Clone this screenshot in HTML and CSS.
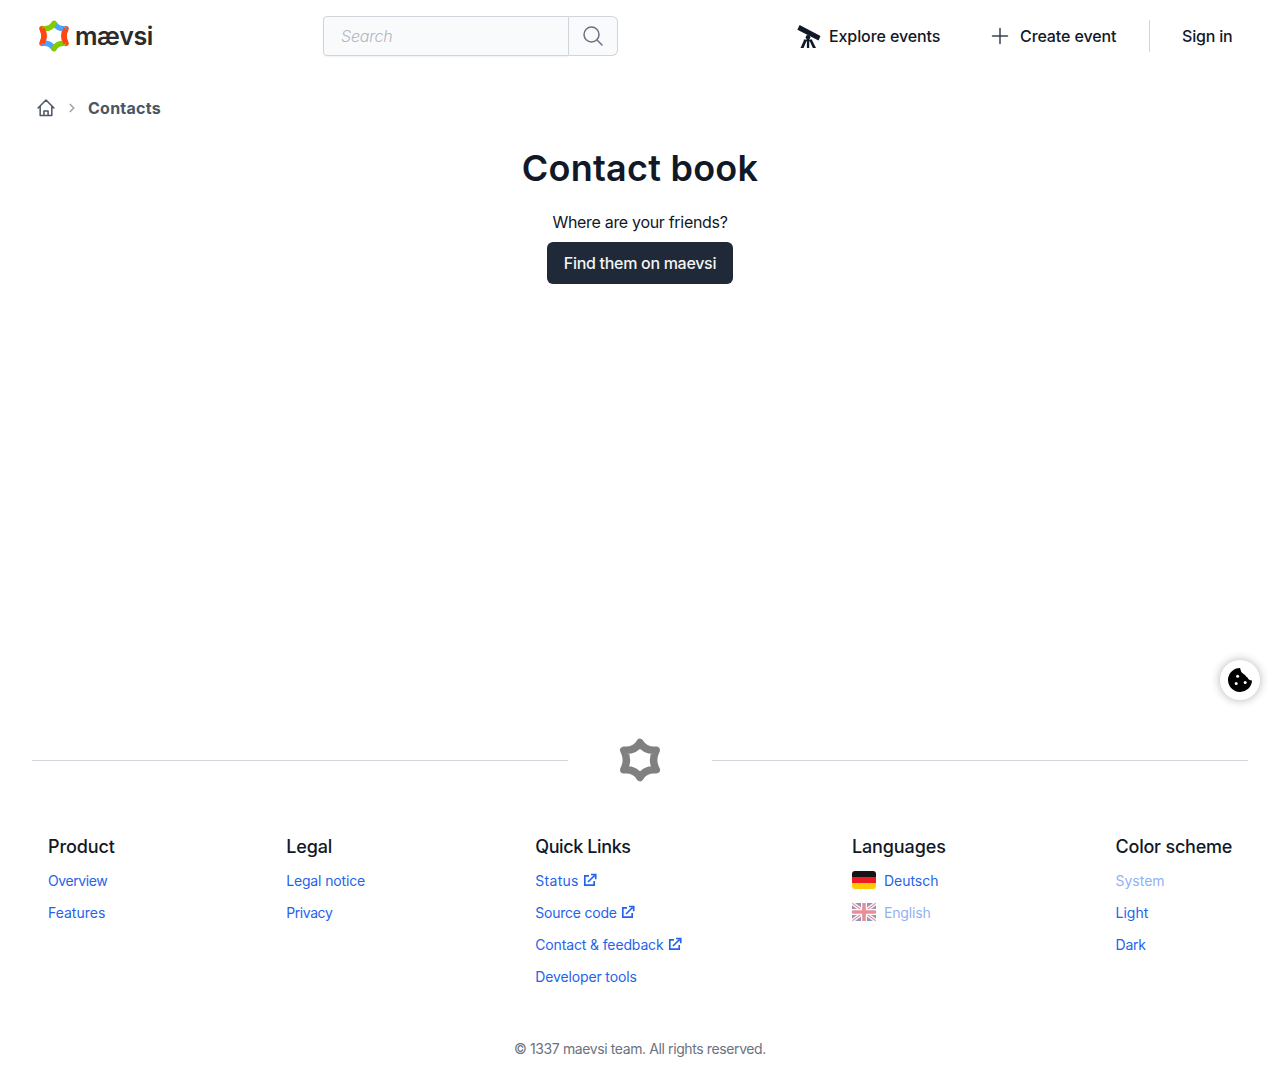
FILE: index.html
```html
<!DOCTYPE html>
<html lang="en">
<head>
<meta charset="utf-8">
<title>Contact book · maevsi</title>
<link rel="stylesheet" href="styles.css">
</head>
<body>
<header class="header">
  <a class="logo" href="#">
    <svg class="logo-star" viewBox="0 0 42 44" fill="none" stroke-width="7.500" stroke-linecap="round">
      <path stroke="#ff4713" d="M37.500 12Q32 22 37.500 32M4.500 12Q10 22 4.500 32"/>
      <path stroke="#4da3ff" d="M22.500 6.500Q27 12.500 35 12M7 32Q15 31.500 19.500 37.500"/>
      <path stroke="#80cc00" d="M8 12Q17 12 21 4.500M34 32Q25 32 21 39.500"/>
      <path stroke="#ff4713" stroke-linecap="butt" d="M37.500 12Q32 22 37.500 32M4.500 12Q10 22 4.500 32"/>
    </svg>
    <span class="wordmark">mævsi</span>
  </a>
  <form class="search">
    <input class="search-input" type="text" placeholder="Search">
    <button class="search-button" type="button" aria-label="Search">
      <svg width="24" height="24" viewBox="0 0 24 24" fill="none" stroke="currentColor" stroke-width="1.5" stroke-linecap="round"><path d="m21 21-5.2-5.2M10.5 18a7.5 7.5 0 1 0 0-15 7.5 7.5 0 0 0 0 15Z"/></svg>
    </button>
  </form>
  <nav class="nav">
    <a class="nav-link explore" href="#">
      <svg width="24" height="24" viewBox="0 0 24 24" fill="currentColor"><path d="M2.600 1 23.500 12l-2 4.500L.4 5.800Z"/><circle cx="11" cy="13.200" r="2.300"/><path d="M6.800 15.500h8.400v1.700H6.800zM7.100 16h2.800L6.600 24H3.500zM9.900 15h2.300v9H9.900zM12.200 16h2.800l4 8h-3.100z"/></svg>
      <span class="t-nav">Explore events</span>
    </a>
    <a class="nav-link create" href="#">
      <svg width="24" height="24" viewBox="0 0 24 24" fill="none" stroke="currentColor" stroke-width="1.5" stroke-linecap="round"><path d="M12 4.5v15M4.500 12h15"/></svg>
      <span class="t-nav">Create event</span>
    </a>
    <a class="nav-link signin" href="#"><span class="t-sign">Sign in</span></a>
  </nav>
</header>
<main class="main">
  <nav class="breadcrumb">
    <svg width="20" height="20" viewBox="0 0 24 24" fill="none" stroke="currentColor" stroke-width="1.800" stroke-linecap="round" stroke-linejoin="round"><path d="m2.500 12 9.500-9.500 9.500 9.500M5 10v11h14V10M9.500 21v-5.500h5V21"/></svg>
    <svg class="chevron" width="16" height="16" viewBox="0 0 16 16" fill="none" stroke="currentColor" stroke-width="1.5"><path d="m5.800 4 4 4-4 4"/></svg>
    <span class="t-contacts">Contacts</span>
  </nav>
  <h1 class="title">Contact book</h1>
  <p class="question">Where are your friends?</p>
  <a class="find-button" href="#">Find them on maevsi</a>
</main>
<button class="cookie" type="button" aria-label="Cookie settings">
  <svg width="24" height="24" viewBox="0 0 24 24"><path d="M12 0A12 12 0 1 0 24 12.500Q20.500 12.500 19.500 9.500L18 8.500Q17.500 6.500 15.500 6 12.500 4 12 0Z"/><g fill="#fff"><circle cx="9.600" cy="8.300" r="1.500"/><circle cx="8.200" cy="15.600" r="1.500"/><circle cx="17.200" cy="14.400" r="1.500"/></g></svg>
</button>
<footer class="footer">
  <div class="divider">
    <span class="line"></span>
    <svg width="42" height="44" viewBox="0 0 42 44" fill="none" stroke="#808080" stroke-width="7.500" stroke-linecap="round" stroke-linejoin="round"><path d="M21 4.500Q25.500 13 37.200 12.200Q32 22 37.200 31.800Q25.500 31 21 39.500Q16.500 31 4.800 31.800Q10 22 4.800 12.200Q16.500 13 21 4.500Z"/></svg>
    <span class="line"></span>
  </div>
  <div class="columns">
    <section class="column product">
      <h2>Product</h2>
      <a class="tightest" href="#">Overview</a>
      <a href="#">Features</a>
    </section>
    <section class="column legal">
      <h2>Legal</h2>
      <a class="tight" href="#">Legal notice</a>
      <a class="tightest" href="#">Privacy</a>
    </section>
    <section class="column quick">
      <h2>Quick Links</h2>
      <a href="#"><span class="wide">Status</span><svg class="external" viewBox="0 0 14 14"><path d="M6 2.800H1.800v9.400h9.400V8M5 9l6.500-6.500M8 1.500h4.700v4.700"/></svg></a>
      <a href="#"><span class="tighter">Source code</span><svg class="external" viewBox="0 0 14 14"><path d="M6 2.800H1.800v9.400h9.400V8M5 9l6.500-6.500M8 1.500h4.700v4.700"/></svg></a>
      <a href="#"><span class="tight">Contact &amp; feedback</span><svg class="external" viewBox="0 0 14 14"><path d="M6 2.800H1.800v9.400h9.400V8M5 9l6.500-6.500M8 1.500h4.700v4.700"/></svg></a>
      <a class="tight" href="#">Developer tools</a>
    </section>
    <section class="column languages">
      <h2>Languages</h2>
      <a href="#"><svg class="flag" viewBox="0 0 24 18"><path fill="#141414" d="M0 0h24v6H0z"/><path fill="#ed1c24" d="M0 6h24v6H0z"/><path fill="#ffcb00" d="M0 12h24v6H0z"/></svg>Deutsch</a>
      <a class="disabled" href="#"><svg class="flag square" viewBox="0 0 24 18"><path fill="#29337a" d="M0 0h24v18H0z"/><path stroke="#fff" stroke-width="3.600" d="m0 0 24 18M24 0 0 18"/><path stroke="#d32030" stroke-width="1.200" d="m0 0 24 18M24 0 0 18"/><path stroke="#fff" stroke-width="6" d="M12 0v18M0 9h24"/><path stroke="#d32030" stroke-width="3.600" d="M12 0v18M0 9h24"/></svg><span class="tight">English</span></a>
    </section>
    <section class="column scheme">
      <h2>Color scheme</h2>
      <a class="disabled" href="#">System</a>
      <a href="#">Light</a>
      <a class="tighter" href="#">Dark</a>
    </section>
  </div>
  <p class="copyright">© 1337 maevsi team. All rights reserved.</p>
</footer>
</body>
</html>
```
FILE: styles.css
```css
* { box-sizing: border-box; }
body { margin: 0; min-height: 1076px; display: flex; flex-direction: column; background: #fff; color: #111827; font: 16px/24px Inter, sans-serif; white-space: nowrap; }
h1, h2, p { margin: 0; }
a { color: inherit; text-decoration: none; }
svg { flex: none; display: block; }
.header { height: 72px; padding: 0 48px 0 38px; display: flex; align-items: center; }
.logo { width: 285px; display: flex; align-items: center; }
.logo-star { width: 32px; height: 32px; }
.wordmark { margin: -1px 0 0 5px; color: #2b2b2b; font: 600 25px/32px Inter, sans-serif; letter-spacing: -0.5px; }
.search { width: 295px; height: 40px; display: flex; }
.search-input { width: 246px; padding: 0 17px; border: 1px solid #d1d5db; border-radius: 4px 0 0 4px; background: #f9fafb; font: italic 300 16px/24px Inter, sans-serif; letter-spacing: -0.2px; box-shadow: 0 1px 2px rgba(0, 0, 0, .06); }
.search-input::placeholder { color: #b3b6bc; opacity: 1; }
.search-button { width: 49px; padding: 0 0 0 12px; border: 1px solid #d1d5db; border-left: 0; border-radius: 0 6px 6px 0; background: #f9fafb; color: #6b7280; }
.nav { margin-left: auto; display: flex; align-items: center; font-weight: 450; }
.nav-link { display: flex; align-items: center; gap: 8px; }
.t-nav { letter-spacing: -0.1px; }
.t-sign { letter-spacing: -0.2px; }
.explore { width: 191px; }
.create { width: 161px; }
.create svg { color: #374151; }
.signin { width: 83px; height: 32px; padding-left: 32px; border-left: 1px solid #d1d5db; }
.main { height: 588px; display: flex; flex-direction: column; align-items: center; }
.breadcrumb { width: 100%; height: 24px; margin-top: 24px; padding-left: 36px; display: flex; align-items: center; color: #4b5563; font-weight: 650; }
.t-contacts { letter-spacing: 0.25px; }
.chevron { margin: 0 8px; color: #9ca3af; }
.title { margin-top: 28px; font-size: 36px; line-height: 40px; font-weight: 600; letter-spacing: 0.25px; }
.question { margin-top: 22px; letter-spacing: -0.31px; }
.find-button { width: 186px; height: 42px; margin-top: 8px; display: flex; align-items: center; justify-content: center; border-radius: 6px; background: #1f2937; color: #f3f4f6; font-weight: 450; letter-spacing: -0.3px; }
.cookie { position: fixed; left: 1220px; top: 660px; width: 40px; height: 40px; padding: 8px; border: 0; border-radius: 50%; background: #fff; box-shadow: 0 0 10px rgba(0, 0, 0, .3); }
.footer { margin-top: 78px; padding: 0 32px; }
.divider { height: 44px; display: flex; align-items: center; justify-content: space-between; }
.line { width: 536px; height: 1px; margin-top: 1px; background: #d1d5db; }
.columns { height: 160px; margin-top: 51px; padding: 0 16px; display: flex; justify-content: space-between; }
.column { display: flex; flex-direction: column; gap: 12px; color: #2563eb; font-size: 14px; line-height: 20px; }
.column h2 { height: 24px; margin-bottom: 2px; color: #111827; font-size: 18px; line-height: 28px; font-weight: 450; letter-spacing: -0.1px; }
.column a { height: 20px; display: flex; align-items: center; }
.product { width: 67.5px; }
.legal { width: 78.5px; }
.quick { width: 146px; }
.quick h2 { letter-spacing: -0.4px; }
.languages { width: 93px; }
.scheme { width: 116.5px; }
.scheme h2 { letter-spacing: -0.22px; }
.wide { letter-spacing: 0.3px; }
.tight { letter-spacing: -0.14px; }
.tighter { letter-spacing: -0.22px; }
.tightest { letter-spacing: -0.4px; }
.external { width: 14px; height: 14px; margin: -2px 0 0 4px; fill: none; stroke: currentColor; stroke-width: 1.7; }
.flag { width: 24px; height: 18px; margin: -2px 8px 0 0; border-radius: 3px; }
.square { border-radius: 1px; }
.disabled { opacity: .5; }
.copyright { margin-top: 46px; color: #6b7280; font-size: 14px; line-height: 20px; letter-spacing: -0.39px; text-align: center; }
```
